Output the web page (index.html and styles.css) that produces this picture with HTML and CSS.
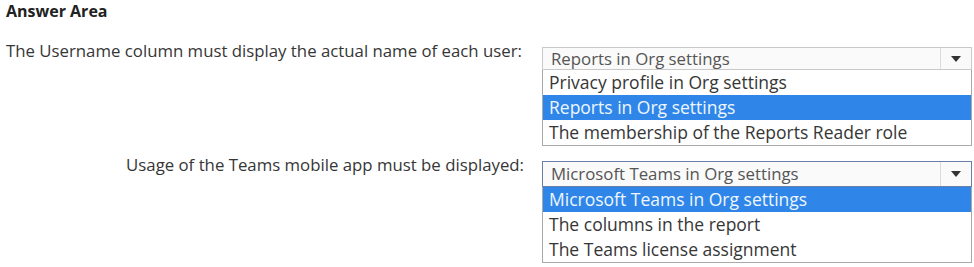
FILE: index.html
```html
<!DOCTYPE html>
<html lang="en">

<head>
    <meta charset="UTF-8">
    <title>Answer Area</title>
    <link rel="stylesheet" href="styles.css">
</head>

<body>
    <h2 class="title">Answer Area</h2>
    <div class="rows">
        <div class="prompt">The Username column must display the actual name of each user:</div>
        <div class="dropdown">
            <div class="select">
                <span class="value">Reports in Org settings</span>
                <span class="arrow"></span>
            </div>
            <ul class="options">
                <li>Privacy profile in Org settings</li>
                <li class="selected">Reports in Org settings</li>
                <li>The membership of the Reports Reader role</li>
            </ul>
        </div>

        <div class="prompt">Usage of the Teams mobile app must be displayed:</div>
        <div class="dropdown">
            <div class="select focus">
                <span class="value">Microsoft Teams in Org settings</span>
                <span class="arrow"></span>
            </div>
            <ul class="options">
                <li class="selected">Microsoft Teams in Org settings</li>
                <li>The columns in the report</li>
                <li>The Teams license assignment</li>
            </ul>
        </div>
    </div>
</body>

</html>
```

FILE: styles.css
```css
body {
    margin: 0;
    padding: 0 0 0 6px;
    background: #fff;
    color: #363636;
    font-family: "Open Sans", "Liberation Sans", sans-serif;
    font-size: 16.8px;
}

.title {
    margin: 0;
    padding-top: 1px;
    font-size: 16px;
    line-height: 20px;
    font-weight: bold;
    color: #222;
}

.rows {
    display: grid;
    grid-template-columns: 518px 430px;
    column-gap: 18px;
    row-gap: 15px;
    align-items: start;
    margin-top: 26px;
}

.prompt {
    margin-top: -7px;
    text-align: right;
    line-height: 22px;
    white-space: nowrap;
}

.rows .prompt:first-child {
    text-align: left;
}

.select {
    display: flex;
    height: 21px;
    border: 1px solid #c9c9c9;
    background: #fafafa;
    line-height: 21px;
}

.select.focus {
    height: 24px;
    line-height: 24px;
    border-color: #6a7fa6;
}

.value {
    flex: 1;
    padding-left: 8px;
    color: #555;
}

.arrow {
    width: 30px;
    border-left: 1px solid #dcdcdc;
    position: relative;
}

/* little triangle */
.arrow::after {
    content: "";
    position: absolute;
    left: 10px;
    top: 50%;
    margin-top: -3px;
    border-left: 5px solid transparent;
    border-right: 5px solid transparent;
    border-top: 6px solid #333;
}

.options {
    margin: 0;
    padding: 0;
    list-style: none;
    border: 1px solid #a9a9a9;
    border-top: none;
    background: #fff;
    font-size: 17.5px;
}

.options li {
    height: 25px;
    line-height: 25px;
    padding-left: 6px;
    white-space: nowrap;
}

.options li.selected {
    background: #2f86e8;
    color: #eef6ff;
}
```
